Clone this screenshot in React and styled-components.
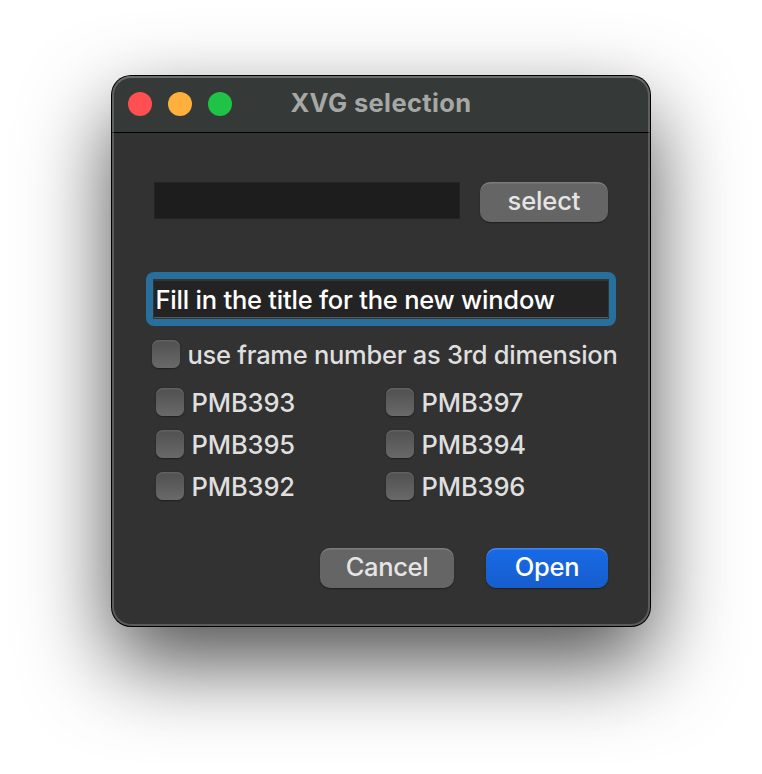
import React from "react";
import styled, { createGlobalStyle, css } from "styled-components";

const GlobalStyle = createGlobalStyle`
  * { box-sizing: border-box; }
  html, body { margin: 0; padding: 0; background: #fff; overflow: hidden; }
`;

const Desktop = styled.main`
  width: 762px;
  height: 774px;
  padding: 76px 112px 0;
  background: #fff;
  overflow: hidden;
  font-family: Inter, "Liberation Sans", sans-serif;
  font-size: 25.5px;
  font-weight: 480;
  line-height: 28px;
  color: #dfdfdf;
`;

const Window = styled.section`
  position: relative;
  display: flex;
  flex-direction: column;
  width: 538px;
  height: 550px;
  border-radius: 19px;
  background: #323232;
  box-shadow: 0 0 0 1px #000, 0 36px 86px rgba(0, 0, 0, 0.7);

  &::after {
    content: "";
    position: absolute;
    inset: 0;
    border-radius: inherit;
    border: 2px solid rgba(255, 255, 255, 0.2);
    border-top-color: rgba(255, 255, 255, 0.27);
    pointer-events: none;
  }
`;

const TitleBar = styled.header`
  display: grid;
  grid-template-columns: 1fr auto 1fr;
  align-items: center;
  height: 57px;
  padding: 0 16px;
  border-bottom: 1px solid #000;
  border-radius: 19px 19px 0 0;
  background: #353937;
`;

const Lights = styled.div`
  display: flex;
  gap: 16px;
`;

const Light = styled.span`
  width: 24px;
  height: 24px;
  border-radius: 50%;
  background: ${(p) => p.$color};
`;

const Title = styled.h1`
  margin: 0;
  padding-bottom: 3px;
  font-size: 25.5px;
  font-weight: 700;
  color: #a5a8a6;
  white-space: nowrap;
`;

const Text = styled.span`
  letter-spacing: ${(p) => p.$track || 0}px;
  white-space: pre;
`;

const Body = styled.div`
  display: flex;
  flex-direction: column;
  padding: 49px 34px 0;
`;

const PickRow = styled.div`
  display: flex;
  align-items: flex-start;
  gap: 20px;
  margin: 0 8px;
`;

const PathField = styled.div`
  width: 306px;
  height: 37px;
  background: #1d1d1d;
  border: 1px solid #232323;
`;

const Button = styled.button`
  display: flex;
  align-items: center;
  justify-content: center;
  width: ${(p) => p.$width}px;
  height: 40px;
  padding: 0 0 2px;
  border: 0;
  border-radius: 10px;
  font: inherit;
  color: #e5e5e5;
  background: #656565;
  box-shadow: inset 0 1.5px 0 rgba(255, 255, 255, 0.15), 0 1px 1.5px rgba(0, 0, 0, 0.4);
  ${(p) =>
    p.$primary &&
    css`
      color: #fff;
      background: linear-gradient(#186ae8, #175dcc);
      box-shadow: inset 0 1.5px 0 rgba(255, 255, 255, 0.2), 0 1px 1.5px rgba(0, 0, 0, 0.4);
    `}
`;

const FocusRing = styled.div`
  height: 54px;
  margin-top: 50px;
  padding: 7px;
  border-radius: 8px;
  background: #276f9c;
`;

const TitleField = styled.div`
  display: flex;
  align-items: center;
  height: 40px;
  padding-left: 1.5px;
  border: 1px solid #38332f;
  border-top-width: 2px;
  border-bottom: 0;
  background: #232323;
  box-shadow: inset 0 -1px 0 #38332f, inset 0 -2px 0 #5a5a5a;
  color: #fff;
`;

const Check = styled.label`
  display: flex;
  align-items: center;
  gap: 7.5px;
  height: 28px;

  ${Text} {
    padding-top: 2px;
  }
`;

const Box = styled.span`
  flex: none;
  width: 28px;
  height: 28px;
  border-radius: 6.5px;
  background: linear-gradient(#505050, #696969);
  box-shadow: inset 0 1.5px 0 rgba(255, 255, 255, 0.1), 0 0.5px 1.5px rgba(0, 0, 0, 0.4);
`;

const FrameOption = styled.div`
  margin: 14px 0 0 6px;
`;

const Items = styled.div`
  display: grid;
  grid-template-columns: 230px 1fr;
  row-gap: 14px;
  margin: 20px 0 0 10px;
`;

const Actions = styled.footer`
  display: flex;
  justify-content: flex-end;
  gap: 32px;
  margin: 48px 8px 0;
`;

const items = ["PMB393", "PMB397", "PMB395", "PMB394", "PMB392", "PMB396"];

function CheckItem({ text, track }) {
  return (
    <Check>
      <Box />
      <Text $track={track}>{text}</Text>
    </Check>
  );
}

export default function App() {
  return (
    <>
      <GlobalStyle />
      <Desktop>
        <Window>
          <TitleBar>
            <Lights>
              <Light $color="#ff4f50" />
              <Light $color="#ffb03c" />
              <Light $color="#1fc447" />
            </Lights>
            <Title>
              <Text $track={0.37}>XVG selection</Text>
            </Title>
          </TitleBar>
          <Body>
            <PickRow>
              <PathField />
              <Button $width={128}>
                <Text $track={-0.1}>select</Text>
              </Button>
            </PickRow>
            <FocusRing>
              <TitleField>
                <Text $track={-0.22}>Fill in the title for the new window</Text>
              </TitleField>
            </FocusRing>
            <FrameOption>
              <CheckItem text="use frame number as 3rd dimension" track={-0.27} />
            </FrameOption>
            <Items>
              {items.map((text) => (
                <CheckItem key={text} text={text} track={-0.12} />
              ))}
            </Items>
            <Actions>
              <Button $width={134}>
                <Text $track={-0.35}>Cancel</Text>
              </Button>
              <Button $width={122} $primary>
                <Text $track={-0.25}>Open</Text>
              </Button>
            </Actions>
          </Body>
        </Window>
      </Desktop>
    </>
  );
}
